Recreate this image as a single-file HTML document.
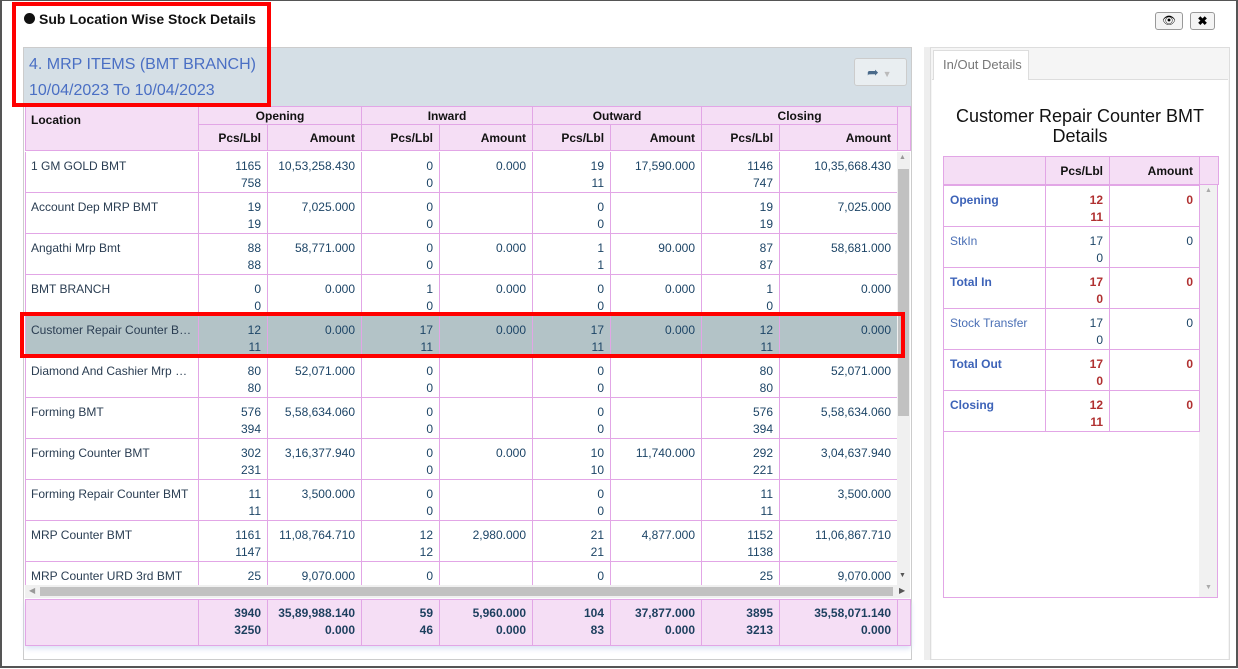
<!DOCTYPE html>
<html><head><meta charset="utf-8"><style>
*{box-sizing:border-box;margin:0;padding:0}
body{width:1238px;height:669px;overflow:hidden;background:#fff;font-family:"Liberation Sans",sans-serif;font-size:12px;position:relative}
.abs{position:absolute}
table{border-collapse:collapse;table-layout:fixed}
td,th{border:1px solid #e2a6e6;overflow:hidden;white-space:nowrap}
.hd th{background:#f5def5;color:#111;font-weight:bold;height:18px;text-align:center}
.hd tr.r2 th{height:26px;text-align:right;padding-right:6px}
.bd td{height:41px;vertical-align:top;padding:6px 6px 0;line-height:17px;color:#1c4466;text-align:right}
.bd td:first-child{text-align:left;color:#2a3d52;text-overflow:ellipsis;padding-left:5px}
.bd tr.sel td{background:#b3c3c7}
.ft td{height:46px;background:#f5def5;font-weight:bold;text-align:right;padding:5px 6px 0;line-height:17px;color:#1c3f5e;vertical-align:top}
.rt td{height:41px;vertical-align:top;padding:6px 6px 0;line-height:17px;text-align:right;color:#1c4466}
.rt td:first-child{text-align:left;color:#4a6fb5}
.rt tr.b td{font-weight:bold;color:#b03030}
.rt tr.b td:first-child{color:#3d63b8}
</style></head><body>
<div class="abs" style="left:0;top:0;width:1238px;height:668px;border:2px solid #555;border-top:1px solid #555;border-bottom:2px solid #555"></div>
<div class="abs" style="left:24px;top:13px;width:11px;height:11px;border-radius:50%;background:#111"></div>
<div class="abs" style="left:39px;top:11px;font-size:14px;font-weight:bold;color:#111">Sub Location Wise Stock Details</div>
<div class="abs" style="left:1155px;top:12px;width:28px;height:18px;border:1px solid #999;border-radius:3px;background:#f4f4f4;font-size:11px;text-align:center;line-height:16px">👁</div>
<div class="abs" style="left:1190px;top:12px;width:25px;height:18px;border:1px solid #999;border-radius:3px;background:#f4f4f4;font-size:12px;font-weight:bold;text-align:center;line-height:16px">✖</div>

<!-- left panel -->
<div class="abs" style="left:23px;top:47px;width:889px;height:613px;border:1px solid #ccc;background:#fff"></div>
<div class="abs" style="left:24px;top:48px;width:887px;height:58px;background:#d5dfe6"></div>
<div class="abs" style="left:29px;top:52px;font-size:16px;color:#4a6fc4;line-height:26px">4. MRP ITEMS (BMT BRANCH)<br>10/04/2023 To 10/04/2023</div>
<div class="abs" style="left:854px;top:58px;width:53px;height:28px;border:1px solid #ccc;border-radius:3px;background:#e9eef1;color:#4a6a8a;font-size:14px;line-height:26px;padding-left:12px">➦ <span style="color:#bbb;font-size:9px">▼</span></div>

<table class="abs hd" style="left:25px;top:106px;width:885px">
<colgroup><col style="width:173px"><col style="width:69px"><col style="width:94px"><col style="width:78px"><col style="width:93px"><col style="width:78px"><col style="width:91px"><col style="width:78px"><col style="width:118px"><col style="width:13px"></colgroup>
<tr><th rowspan="2" style="text-align:left;padding-left:5px;vertical-align:top;padding-top:6px">Location</th><th colspan="2">Opening</th><th colspan="2">Inward</th><th colspan="2">Outward</th><th colspan="2">Closing</th><th rowspan="2"></th></tr>
<tr class="r2"><th>Pcs/Lbl</th><th>Amount</th><th>Pcs/Lbl</th><th>Amount</th><th>Pcs/Lbl</th><th>Amount</th><th>Pcs/Lbl</th><th>Amount</th></tr>
</table>

<div class="abs" style="left:25px;top:152px;width:872px;height:433px;overflow:hidden">
<table class="bd" style="width:872px;margin-top:-1px">
<colgroup><col style="width:173px"><col style="width:69px"><col style="width:94px"><col style="width:78px"><col style="width:93px"><col style="width:78px"><col style="width:91px"><col style="width:78px"><col style="width:118px"></colgroup>
<tr><td>1 GM GOLD BMT</td><td>1165<br>758</td><td>10,53,258.430</td><td>0<br>0</td><td>0.000</td><td>19<br>11</td><td>17,590.000</td><td>1146<br>747</td><td>10,35,668.430</td></tr>
<tr><td>Account Dep MRP BMT</td><td>19<br>19</td><td>7,025.000</td><td>0<br>0</td><td></td><td>0<br>0</td><td></td><td>19<br>19</td><td>7,025.000</td></tr>
<tr><td>Angathi Mrp Bmt</td><td>88<br>88</td><td>58,771.000</td><td>0<br>0</td><td>0.000</td><td>1<br>1</td><td>90.000</td><td>87<br>87</td><td>58,681.000</td></tr>
<tr><td>BMT BRANCH</td><td>0<br>0</td><td>0.000</td><td>1<br>0</td><td>0.000</td><td>0<br>0</td><td>0.000</td><td>1<br>0</td><td>0.000</td></tr>
<tr class="sel"><td>Customer Repair Counter BMT</td><td>12<br>11</td><td>0.000</td><td>17<br>11</td><td>0.000</td><td>17<br>11</td><td>0.000</td><td>12<br>11</td><td>0.000</td></tr>
<tr><td>Diamond And Cashier Mrp BMT</td><td>80<br>80</td><td>52,071.000</td><td>0<br>0</td><td></td><td>0<br>0</td><td></td><td>80<br>80</td><td>52,071.000</td></tr>
<tr><td>Forming BMT</td><td>576<br>394</td><td>5,58,634.060</td><td>0<br>0</td><td></td><td>0<br>0</td><td></td><td>576<br>394</td><td>5,58,634.060</td></tr>
<tr><td>Forming Counter BMT</td><td>302<br>231</td><td>3,16,377.940</td><td>0<br>0</td><td>0.000</td><td>10<br>10</td><td>11,740.000</td><td>292<br>221</td><td>3,04,637.940</td></tr>
<tr><td>Forming Repair Counter BMT</td><td>11<br>11</td><td>3,500.000</td><td>0<br>0</td><td></td><td>0<br>0</td><td></td><td>11<br>11</td><td>3,500.000</td></tr>
<tr><td>MRP Counter BMT</td><td>1161<br>1147</td><td>11,08,764.710</td><td>12<br>12</td><td>2,980.000</td><td>21<br>21</td><td>4,877.000</td><td>1152<br>1138</td><td>11,06,867.710</td></tr>
<tr><td>MRP Counter URD 3rd BMT</td><td>25<br>0</td><td>9,070.000</td><td>0<br>0</td><td></td><td>0<br>0</td><td></td><td>25<br>0</td><td>9,070.000</td></tr>
</table></div>
<!-- vertical scrollbar -->
<div class="abs" style="left:897px;top:152px;width:13px;height:433px;background:#f0f0f0"></div>
<div class="abs" style="left:898px;top:169px;width:11px;height:247px;background:#c1c1c1"></div>
<div class="abs" style="left:899px;top:154px;font-size:7px;color:#999">▲</div>
<div class="abs" style="left:899px;top:572px;font-size:7px;color:#555">▼</div>
<!-- horizontal scrollbar -->
<div class="abs" style="left:25px;top:585px;width:885px;height:13px;background:#f0f0f0"></div>
<div class="abs" style="left:40px;top:587px;width:853px;height:9px;background:#c1c1c1"></div>
<div class="abs" style="left:29px;top:586px;font-size:8px;color:#999">◀</div>
<div class="abs" style="left:899px;top:586px;font-size:8px;color:#555">▶</div>

<table class="abs ft" style="left:25px;top:599px;width:885px;box-shadow:0 3px 5px #dde4f5">
<colgroup><col style="width:173px"><col style="width:69px"><col style="width:94px"><col style="width:78px"><col style="width:93px"><col style="width:78px"><col style="width:91px"><col style="width:78px"><col style="width:118px"><col style="width:13px"></colgroup>
<tr><td></td><td>3940<br>3250</td><td>35,89,988.140<br>0.000</td><td>59<br>46</td><td>5,960.000<br>0.000</td><td>104<br>83</td><td>37,877.000<br>0.000</td><td>3895<br>3213</td><td>35,58,071.140<br>0.000</td><td style="border-left:none"></td></tr>
</table>

<!-- right panel -->
<div class="abs" style="left:924px;top:47px;width:6px;height:613px;background:#eee"></div>
<div class="abs" style="left:930px;top:47px;width:300px;height:613px;border:1px solid #ddd;background:#f5f5f5"></div>
<div class="abs" style="left:932px;top:79px;width:296px;height:580px;background:#fff;border-top:1px solid #ddd"></div>
<div class="abs" style="left:933px;top:50px;width:96px;height:30px;background:#fff;border:1px solid #ddd;border-bottom:none;color:#777;font-size:13px;padding:6px 0 0 9px">In/Out Details</div>
<div class="abs" style="left:943px;top:106px;width:274px;text-align:center;font-size:18px;line-height:20px;color:#111">Customer Repair Counter BMT<br>Details</div>
<div class="abs" style="left:943px;top:156px;width:275px;height:442px;border:1px solid #e2a6e6"></div>
<div class="abs" style="left:1199px;top:184px;width:18px;height:413px;background:#f1f1f1"></div>
<div class="abs" style="left:1205px;top:187px;font-size:7px;color:#aaa">▲</div>
<div class="abs" style="left:1205px;top:584px;font-size:7px;color:#aaa">▼</div>
<table class="abs hd" style="left:943px;top:156px;width:275px">
<colgroup><col style="width:102px"><col style="width:64px"><col style="width:90px"><col style="width:19px"></colgroup>
<tr class="r2"><th style="height:28px"></th><th>Pcs/Lbl</th><th>Amount</th><th></th></tr>
</table>
<table class="abs rt" style="left:943px;top:185px;width:257px">
<colgroup><col style="width:102px"><col style="width:64px"><col style="width:90px"></colgroup>
<tr class="b"><td>Opening</td><td>12<br>11</td><td>0</td></tr>
<tr><td>StkIn</td><td>17<br>0</td><td>0</td></tr>
<tr class="b"><td>Total In</td><td>17<br>0</td><td>0</td></tr>
<tr><td>Stock Transfer</td><td>17<br>0</td><td>0</td></tr>
<tr class="b"><td>Total Out</td><td>17<br>0</td><td>0</td></tr>
<tr class="b"><td>Closing</td><td>12<br>11</td><td>0</td></tr>
</table>

<!-- red highlight boxes -->
<div class="abs" style="left:12px;top:2px;width:259px;height:105px;border:4px solid #f00"></div>
<div class="abs" style="left:20px;top:312px;width:885px;height:46px;border:4px solid #f00"></div>
</body></html>
